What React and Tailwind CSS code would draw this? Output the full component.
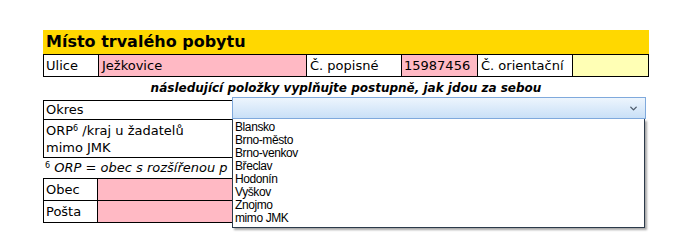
import { ChevronDown } from "lucide-react";

const okresy = [
  "Blansko",
  "Brno-město",
  "Brno-venkov",
  "Břeclav",
  "Hodonín",
  "Vyškov",
  "Znojmo",
  "mimo JMK",
];

const verdana = { fontFamily: '"DejaVu Sans", Verdana, sans-serif' };

export default function App() {
  return (
    <div className="w-[689px] h-[252px] bg-white text-black" style={verdana}>
      <div className="relative ml-[43px] pt-[30px] w-[606px]">
        {/* header */}
        <div className="h-[24px] bg-[#ffd800] pl-[3px] text-[16px] font-bold leading-[24px]">
          Místo trvalého pobytu
        </div>

        {/* Ulice row */}
        <div className="flex h-[23px] border border-black text-[13px] leading-[21px]">
          <div className="w-[55px] border-r border-black pl-[2px]">Ulice</div>
          <div className="w-[208px] border-r border-black bg-[#ffb9c4] pl-[3px]">Ježkovice</div>
          <div className="w-[95px] border-r border-black pl-[3px]">Č. popisné</div>
          <div className="w-[76px] border-r border-black bg-[#ffb9c4] pl-[2px]">15987456</div>
          <div className="w-[95px] border-r border-black pl-[3px]">Č. orientační</div>
          <div className="flex-1 bg-[#ffffb5]"></div>
        </div>

        <div className="h-[23px] text-center text-[12px] font-bold italic leading-[22px]">
          následující položky vyplňujte postupně, jak jdou za sebou
        </div>

        {/* Okres + ORP */}
        <div className="w-[560px]">
          <div className="flex h-[20px] border border-black text-[13px] leading-[18px]">
            <div className="w-[189px] border-r border-black pl-[2px]">Okres</div>
            <div className="flex-1"></div>
          </div>
          <div className="flex h-[38px] border border-t-0 border-black text-[13px] leading-[17px]">
            <div className="w-[189px] border-r border-black pl-[2px] pt-[2px]">
              ORP<sup className="text-[8px]">6</sup> /kraj u žadatelů
              <br />
              mimo JMK
            </div>
            <div className="flex-1"></div>
          </div>
        </div>

        <div className="h-[20px] w-[189px] overflow-hidden whitespace-nowrap pl-[2px] text-[13px] italic leading-[20px]">
          <sup className="text-[8px] not-italic">6</sup> ORP = obec s rozšířenou p
        </div>

        {/* Obec / Pošta */}
        <div className="w-[560px] border border-black text-[13px] leading-[21px]">
          <div className="flex h-[22px] border-b border-black">
            <div className="w-[54px] border-r border-black pl-[2px]">Obec</div>
            <div className="flex-1 bg-[#ffb9c4]"></div>
          </div>
          <div className="flex h-[21px]">
            <div className="w-[54px] border-r border-black pl-[2px]">Pošta</div>
            <div className="flex-1 bg-[#ffb9c4]"></div>
          </div>
        </div>

        {/* combo box, opened */}
        <div className="absolute left-[189px] top-[97px] w-[414px]">
          <div className="flex h-[22px] items-center justify-end border border-[#7fa9dc] bg-gradient-to-b from-[#edf5fd] to-[#c9e0f7] pr-[6px]">
            <ChevronDown size={11} strokeWidth={3} className="text-[#4d5a6a]" />
          </div>
          <div
            className="w-[413px] border border-t-0 border-[#2b3a4a] bg-white px-[2px] pt-[2px] pb-[2px] text-[12px] leading-[13px] tracking-[-0.4px] shadow-[2px_2px_2px_rgba(0,0,0,0.35)]"
            style={{ fontFamily: '"Liberation Sans", Arial, sans-serif' }}
          >
            {okresy.map((o) => (
              <div key={o}>{o}</div>
            ))}
          </div>
        </div>
      </div>
    </div>
  );
}
